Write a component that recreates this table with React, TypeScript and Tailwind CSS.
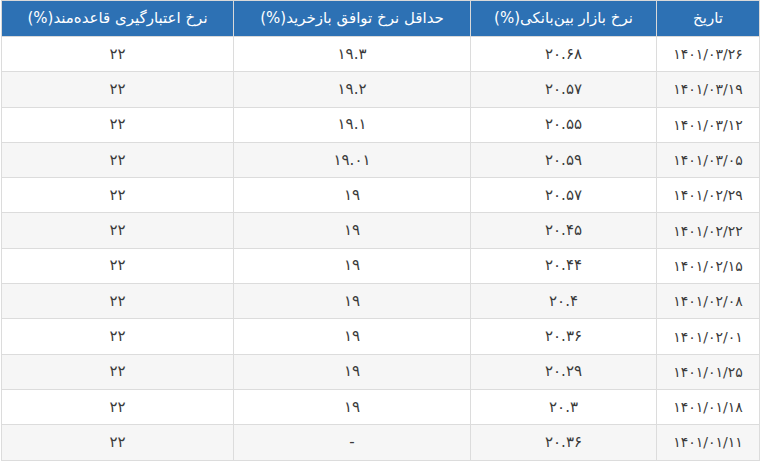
import React from "react";

const rows: [string, string, string, string][] = [
  ["۱۴۰۱/۰۳/۲۶", "۲۰.۶۸", "۱۹.۳", "۲۲"],
  ["۱۴۰۱/۰۳/۱۹", "۲۰.۵۷", "۱۹.۲", "۲۲"],
  ["۱۴۰۱/۰۳/۱۲", "۲۰.۵۵", "۱۹.۱", "۲۲"],
  ["۱۴۰۱/۰۳/۰۵", "۲۰.۵۹", "۱۹.۰۱", "۲۲"],
  ["۱۴۰۱/۰۲/۲۹", "۲۰.۵۷", "۱۹", "۲۲"],
  ["۱۴۰۱/۰۲/۲۲", "۲۰.۴۵", "۱۹", "۲۲"],
  ["۱۴۰۱/۰۲/۱۵", "۲۰.۴۴", "۱۹", "۲۲"],
  ["۱۴۰۱/۰۲/۰۸", "۲۰.۴", "۱۹", "۲۲"],
  ["۱۴۰۱/۰۲/۰۱", "۲۰.۳۶", "۱۹", "۲۲"],
  ["۱۴۰۱/۰۱/۲۵", "۲۰.۲۹", "۱۹", "۲۲"],
  ["۱۴۰۱/۰۱/۱۸", "۲۰.۳", "۱۹", "۲۲"],
  ["۱۴۰۱/۰۱/۱۱", "۲۰.۳۶", "-", "۲۲"],
];

const headers = [
  "تاریخ",
  "نرخ بازار بین‌بانکی(%)",
  "حداقل نرخ توافق بازخرید(%)",
  "نرخ اعتبارگیری قاعده‌مند(%)",
];

export default function App() {
  return (
    <div className="w-[762px] h-[461px] bg-white px-[2px] overflow-hidden" dir="rtl" style={{ fontFamily: '"DejaVu Sans", sans-serif' }}>
      <table className="w-[758px] table-fixed border-collapse">
        <colgroup>
          <col className="w-[103px]" />
          <col className="w-[186px]" />
          <col className="w-[237px]" />
          <col className="w-[232px]" />
        </colgroup>
        <thead>
          <tr className="h-[36px] bg-[#2d71b4]">
            {headers.map((h, i) => (
              <th key={i} className="border border-[#d9d9d9] text-white font-normal text-[15px] text-center p-0 leading-none">
                {h}
              </th>
            ))}
          </tr>
        </thead>
        <tbody>
          {rows.map((r, i) => (
            <tr key={i} className={`h-[35.3px] ${i % 2 === 1 ? "bg-[#f6f6f6]" : "bg-white"}`}>
              {r.map((c, j) => (
                <td
                  key={j}
                  className={
                    j === 0
                      ? "border border-[#dcdcdc] text-[#3a3a3a] text-[14px] tracking-[-0.6px] text-center p-0 leading-none"
                      : "border border-[#dcdcdc] text-[#3a3a3a] text-[15px] text-center p-0 leading-none"
                  }
                >
                  {c}
                </td>
              ))}
            </tr>
          ))}
        </tbody>
      </table>
    </div>
  );
}
